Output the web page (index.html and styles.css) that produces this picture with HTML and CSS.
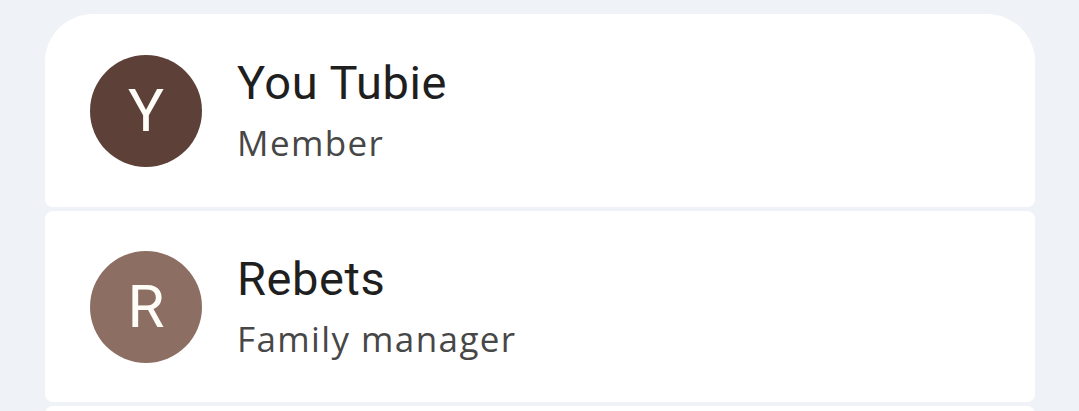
FILE: index.html
```html
<!DOCTYPE html>
<html lang="en">
<head>
    <meta charset="UTF-8">
    <meta name="viewport" content="width=device-width, initial-scale=1.0">
    <title>Family group</title>
    <link rel="stylesheet" href="styles.css">
</head>
<body>

<div class="members">
    <div class="member first">
        <div class="avatar dark">Y</div>
        <div class="info">
            <div class="name">You Tubie</div>
            <div class="role">Member</div>
        </div>
    </div>
    <div class="member">
        <div class="avatar light">R</div>
        <div class="info">
            <div class="name">Rebets</div>
            <div class="role">Family manager</div>
        </div>
    </div>
    <div class="member"></div>
</div>

</body>
</html>
```

FILE: styles.css
```css
html, body {
    margin: 0;
    height: 100%;
    overflow: hidden;
}
body {
    font-family: Roboto, "Open Sans", sans-serif;
    background-color: #eff2f7;
    padding: 14px 44px 0 45px;
    box-sizing: border-box;
}
.members {
    display: flex;
    flex-direction: column;
    gap: 4px;
}
.member {
    display: flex;
    align-items: center;
    gap: 35px;
    height: 191px;
    padding: 0 45px;
    background-color: #fff;
    border-radius: 8px;
    flex-shrink: 0;
}
.member.first {
    height: 193px;
    border-radius: 48px 48px 8px 8px;
}
.avatar {
    width: 112px;
    height: 112px;
    border-radius: 50%;
    flex-shrink: 0;
    display: flex;
    align-items: center;
    justify-content: center;
    color: #fffdf8;
    font-size: 60px;
    line-height: 1;
}
.avatar.dark {
    background-color: #5d4037;
}
.avatar.light {
    background-color: #8d6e63;
}
.info {
    display: flex;
    flex-direction: column;
    padding-top: 6px;
}
.name {
    font-size: 47px;
    line-height: 56px;
    color: #1f1f1f;
    letter-spacing: 0.6px;
}
.role {
    font-family: "Open Sans", Roboto, sans-serif;
    font-size: 35px;
    line-height: 58px;
    margin-top: 3px;
    color: #474747;
    letter-spacing: 1.4px;
}
```
